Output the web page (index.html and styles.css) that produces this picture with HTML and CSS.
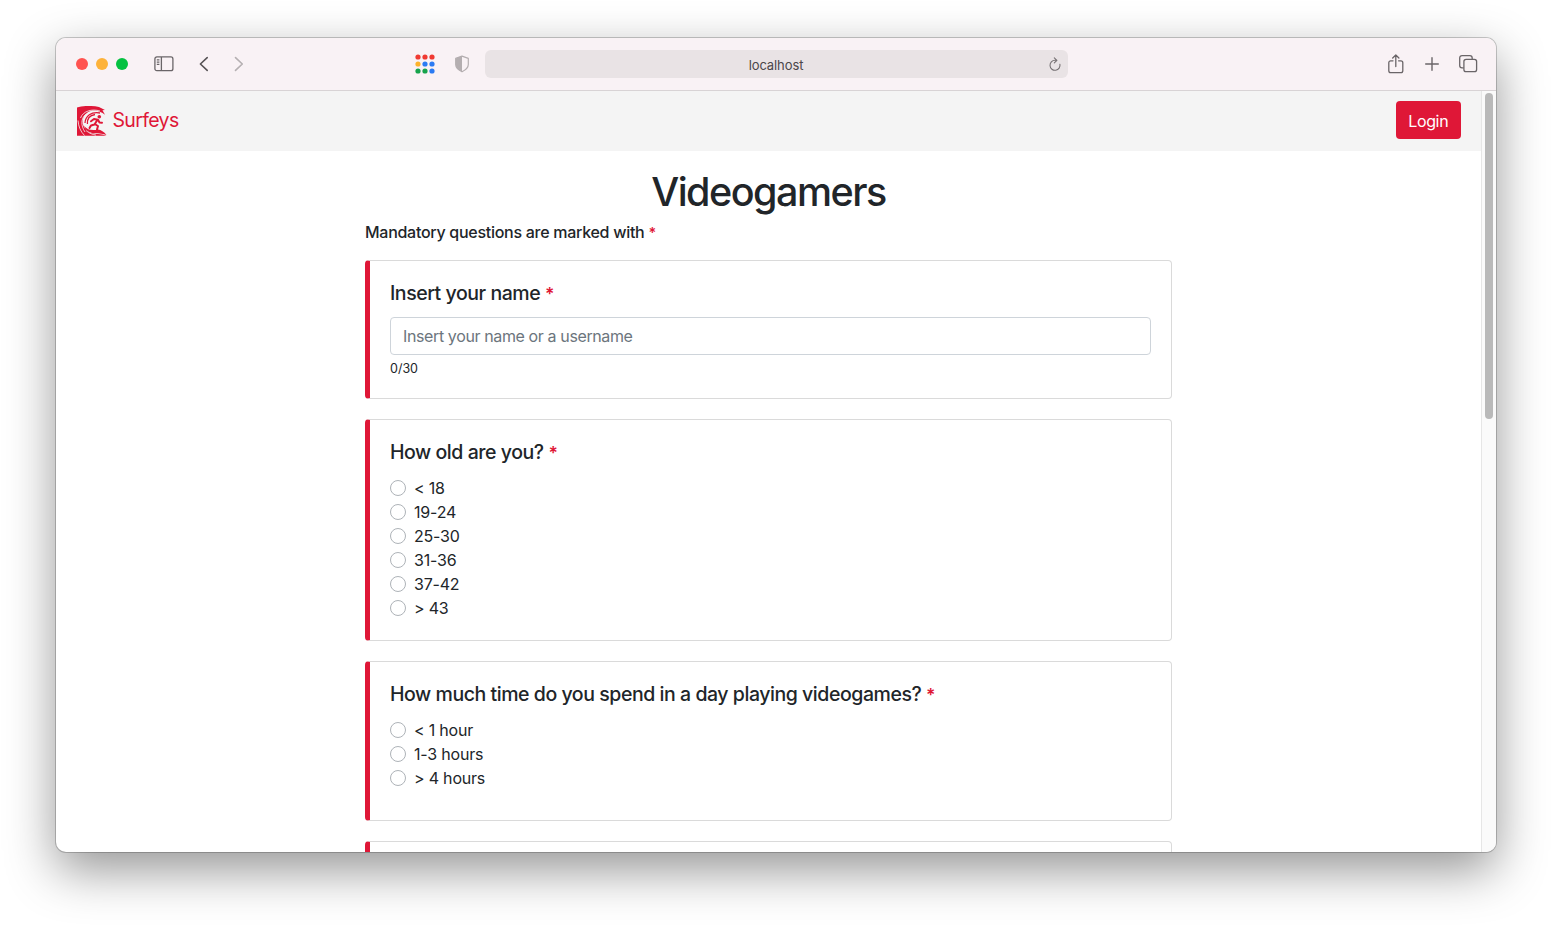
FILE: index.html
```html
<!DOCTYPE html>
<html lang="en">
<head>
<meta charset="utf-8">
<title>Surfeys</title>
<link rel="stylesheet" href="styles.css">
</head>
<body>
<div class="window">
  <div class="toolbar">
    <div class="lights"><i class="light red"></i><i class="light amber"></i><i class="light green"></i></div>
    <svg class="ic sidebar" width="20" height="16" viewBox="0 0 20 16" fill="none" stroke="#6a6568" stroke-width="1.3"><rect x=".9" y=".9" width="18" height="13.8" rx="2"/><path d="M7.4 1v13.6M2.8 3.8h2.6M2.8 6.1h2.6M2.8 8.4h2.6"/></svg>
    <svg class="ic back" width="10" height="16" viewBox="0 0 10 16" fill="none" stroke="#575355" stroke-width="1.6" stroke-linecap="round" stroke-linejoin="round"><path d="M8.2 1.6 1.4 8l6.8 6.4"/></svg>
    <svg class="ic forward" width="10" height="16" viewBox="0 0 10 16" fill="none" stroke="#b5b0b2" stroke-width="1.6" stroke-linecap="round" stroke-linejoin="round"><path d="M1.5 1.6 8.3 8l-6.8 6.4"/></svg>
    <svg class="ic apps" width="20" height="20" viewBox="0 0 20 20"><g fill="#f03a32"><circle cx="3" cy="3" r="2.6"/><circle cx="10" cy="3" r="2.6"/><circle cx="17" cy="3" r="2.6"/></g><circle cx="3" cy="10" r="2.6" fill="#fdb32b"/><g fill="#2b7bf3"><circle cx="10" cy="10" r="2.6"/><circle cx="17" cy="10" r="2.6"/><circle cx="17" cy="17" r="2.6"/></g><g fill="#17a34c"><circle cx="3" cy="17" r="2.6"/><circle cx="10" cy="17" r="2.6"/></g></svg>
    <svg class="ic shield" width="16" height="18" viewBox="0 0 16 18"><path d="M8 1.1 14.3 3.4V9.5c0 3-2.3 5.3-6.3 7.3-4-2-6.3-4.3-6.3-7.3V3.4Z" fill="none" stroke="#b4aeb0" stroke-width="1.2" stroke-linejoin="round"/><path d="M8 1.1v15.7c-4-2-6.3-4.3-6.3-7.3V3.4Z" fill="#b4aeb0"/></svg>
    <div class="address"><span>localhost</span>
      <svg class="reload" width="14" height="15" viewBox="0 0 14 15" fill="none" stroke="#777274" stroke-width="1.1" stroke-linecap="round" stroke-linejoin="round"><path d="M11.9 7.200A5 5 0 1 1 7 3.300h1.600M6.300.8l2.600 2.500-2.600 2.600"/></svg>
    </div>
    <div class="actions">
      <svg width="18" height="20" viewBox="0 0 18 20" fill="none" stroke="#6a6568" stroke-width="1.3" stroke-linecap="round" stroke-linejoin="round"><path d="M6 6.8H3.7A1.900 1.900 0 0 0 1.800 8.700v8a1.900 1.900 0 0 0 1.900 1.900h10.200a1.900 1.900 0 0 0 1.900-1.900v-8a1.900 1.900 0 0 0-1.900-1.900h-2.300M8.800 12.500V1.100M5.700 4l3.100-3L11.900 4"/></svg>
      <svg width="16" height="16" viewBox="0 0 16 16" fill="none" stroke="#6a6568" stroke-width="1.4" stroke-linecap="round"><path d="M8 1.700v12.600M1.700 8h12.600"/></svg>
      <svg width="20" height="20" viewBox="0 0 20 20" fill="none" stroke="#6a6568" stroke-width="1.3"><rect x="5.900" y="5.400" width="12.700" height="12.200" rx="2.200"/><path d="M5.700 13.800H4A2.300 2.300 0 0 1 1.700 11.500V3.900A2.300 2.300 0 0 1 4 1.600h7.900a2.300 2.300 0 0 1 2.300 2.300v1.200"/></svg>
    </div>
  </div>
  <div class="viewport">
    <div class="page">
      <nav class="navbar">
        <a class="brand">
          <svg width="30" height="30" viewBox="0 0 30 30"><path fill="#df1737" d="M0 1.500C6-.5 15-.5 22 1l6 3-2.500.3 2.500 4.500C23 4.500 16 3 10.500 6.500 4.500 10.500 4 18.500 9 23.500l4 3.500c5 1.200 11 .5 16.500 2.700H0Z"/><path fill="none" stroke="#f4f4f4" stroke-width=".8" d="M23 5C15 2.500 6 5 3.500 12M8.500 8.500C4 12.500 3.500 19.500 8 26M1 14.500c.5 6 2.500 11 6.500 15M9 24.500c3 3 7 4 10 4.600"/><path fill="none" stroke="#df1737" stroke-width="1.300" d="M23 7C14 5.500 8.500 10 8 17M18 8.500C12 9.500 10 13 10.400 18"/><circle cx="22.300" cy="10.700" r="1.800" fill="#df1737"/><path fill="none" stroke="#df1737" stroke-width="2" stroke-linejoin="round" stroke-linecap="round" d="m14 15.300 3-2.300 4 .8 1.500 2.700 2.500.2M20 14.500 17.800 18l3.200 2-1 3.500M17.500 18.500l-3.500 1-1.500 2.500"/><path fill="#df1737" d="M7 20c3.500 4 8 4.800 14 3.600 3 .4 6 2.400 8.500 5.400-5-1.800-9-1.200-14.500-2-4-.8-7-3.500-8-7Z"/></svg>
          <span>Surfeys</span>
        </a>
        <button class="login">Login</button>
      </nav>
      <main class="survey">
        <h1>Videogamers</h1>
        <p class="hint">Mandatory questions are marked with <b>*</b></p>
        <section class="card c1">
          <h2>Insert your name <b>*</b></h2>
          <input class="field" type="text" placeholder="Insert your name or a username">
          <div class="count">0/30</div>
        </section>
        <section class="card c2">
          <h2>How old are you? <b>*</b></h2>
          <div class="option"><i></i><span>&lt; 18</span></div>
          <div class="option"><i></i><span>19-24</span></div>
          <div class="option"><i></i><span>25-30</span></div>
          <div class="option"><i></i><span>31-36</span></div>
          <div class="option"><i></i><span>37-42</span></div>
          <div class="option"><i></i><span>&gt; 43</span></div>
        </section>
        <section class="card c3">
          <h2>How much time do you spend in a day playing videogames? <b>*</b></h2>
          <div class="option"><i></i><span>&lt; 1 hour</span></div>
          <div class="option"><i></i><span>1-3 hours</span></div>
          <div class="option"><i></i><span>&gt; 4 hours</span></div>
        </section>
        <section class="card c4"></section>
      </main>
    </div>
    <div class="scrollbar"><div class="thumb"></div></div>
  </div>
</div>
</body>
</html>
```
FILE: styles.css
```css
* { box-sizing: border-box; }
body { margin: 0; padding: 38px 56px 0; height: 926px; overflow: hidden; background: #fff; font: 16px/24px Inter, sans-serif; color: #212529; }
h1, h2, p { margin: 0; font-weight: 500; }
svg { display: block; flex: none; }
.window { width: 1440px; height: 814px; border-radius: 10px; overflow: hidden; display: flex; flex-direction: column; background: #fff; box-shadow: 0 0 0 1px rgba(0,0,0,.2), 0 18px 50px rgba(0,0,0,.42); }
.toolbar { height: 53px; flex: none; background: #f9f2f5; border-bottom: 1px solid #d8d3d5; display: flex; align-items: center; padding: 0 18px 0 20px; }
.lights { display: flex; gap: 8px; }
.light { width: 12px; height: 12px; border-radius: 50%; }
.red { background: #ff5350; }
.amber { background: #fdb23a; }
.green { background: #05c141; }
.sidebar { margin-left: 26px; }
.back { margin-left: 25px; }
.forward { margin-left: 25px; }
.apps { margin-left: 171px; }
.shield { margin-left: 19px; }
.address { margin-left: 14.5px; width: 583px; height: 28px; border-radius: 6px; background: #e9e3e5; display: flex; align-items: center; justify-content: center; position: relative; font-size: 13px; letter-spacing: -.1px; color: #4b4749; padding-top: 2px; }
.reload { position: absolute; right: 6px; top: 7px; }
.actions { margin-left: auto; display: flex; align-items: center; gap: 18.5px; }
.viewport { flex: 1; min-height: 0; display: flex; }
.page { flex: 1; overflow: hidden; }
.scrollbar { width: 15px; background: #fafafa; border-left: 1px solid #e6e6e6; padding: 2px 3px; }
.thumb { width: 8px; height: 326px; border-radius: 4px; background: #b9b9b9; }
.navbar { height: 60px; background: #f4f4f4; display: flex; align-items: center; justify-content: space-between; padding: 0 20px 1px 21px; }
.brand { display: flex; align-items: center; gap: 5.5px; font-size: 19.5px; color: #df1737; letter-spacing: -.65px; }
.brand span { margin-top: -2px; }
.login { width: 65.5px; height: 38px; margin-bottom: 1px; border: 0; border-radius: 4px; background: #df1737; color: #fff; font: 16px Inter, sans-serif; letter-spacing: -.35px; padding: 1px 0 0; }
.survey { width: 807px; margin-left: 309px; padding-top: 17px; }
h1 { font-size: 39.5px; line-height: 48px; text-align: center; letter-spacing: -1.5px; }
.hint { margin: 4px 0 16px; letter-spacing: -.28px; }
b { color: #df1737; font-weight: 600; font-size: .9em; line-height: 1; }
.card { border: 1px solid #dadada; border-left: 5px solid #df1737; border-radius: 4px; padding: 20px; margin-bottom: 20px; }
.c1 { height: 139px; }
.c2 { height: 222px; }
.c3 { height: 160px; }
.c4 { height: 160px; }
h2 { font-size: 19.5px; line-height: 24px; margin-bottom: 12px; letter-spacing: -.45px; }
.field { display: block; width: 761px; height: 38px; border: 1px solid #ced4da; border-radius: 4px; padding: 0 12px; font: 16px Inter, sans-serif; letter-spacing: -.38px; background: #fff; }
.field::placeholder { color: #6c757d; opacity: 1; }
.count { font-size: 12.5px; line-height: 20px; margin-top: 4px; }
.option { display: flex; align-items: center; gap: 8px; height: 24px; }
.option i { width: 16px; height: 16px; border: 1px solid #aeb3b8; border-radius: 50%; }
.option span { letter-spacing: -.2px; }
```
